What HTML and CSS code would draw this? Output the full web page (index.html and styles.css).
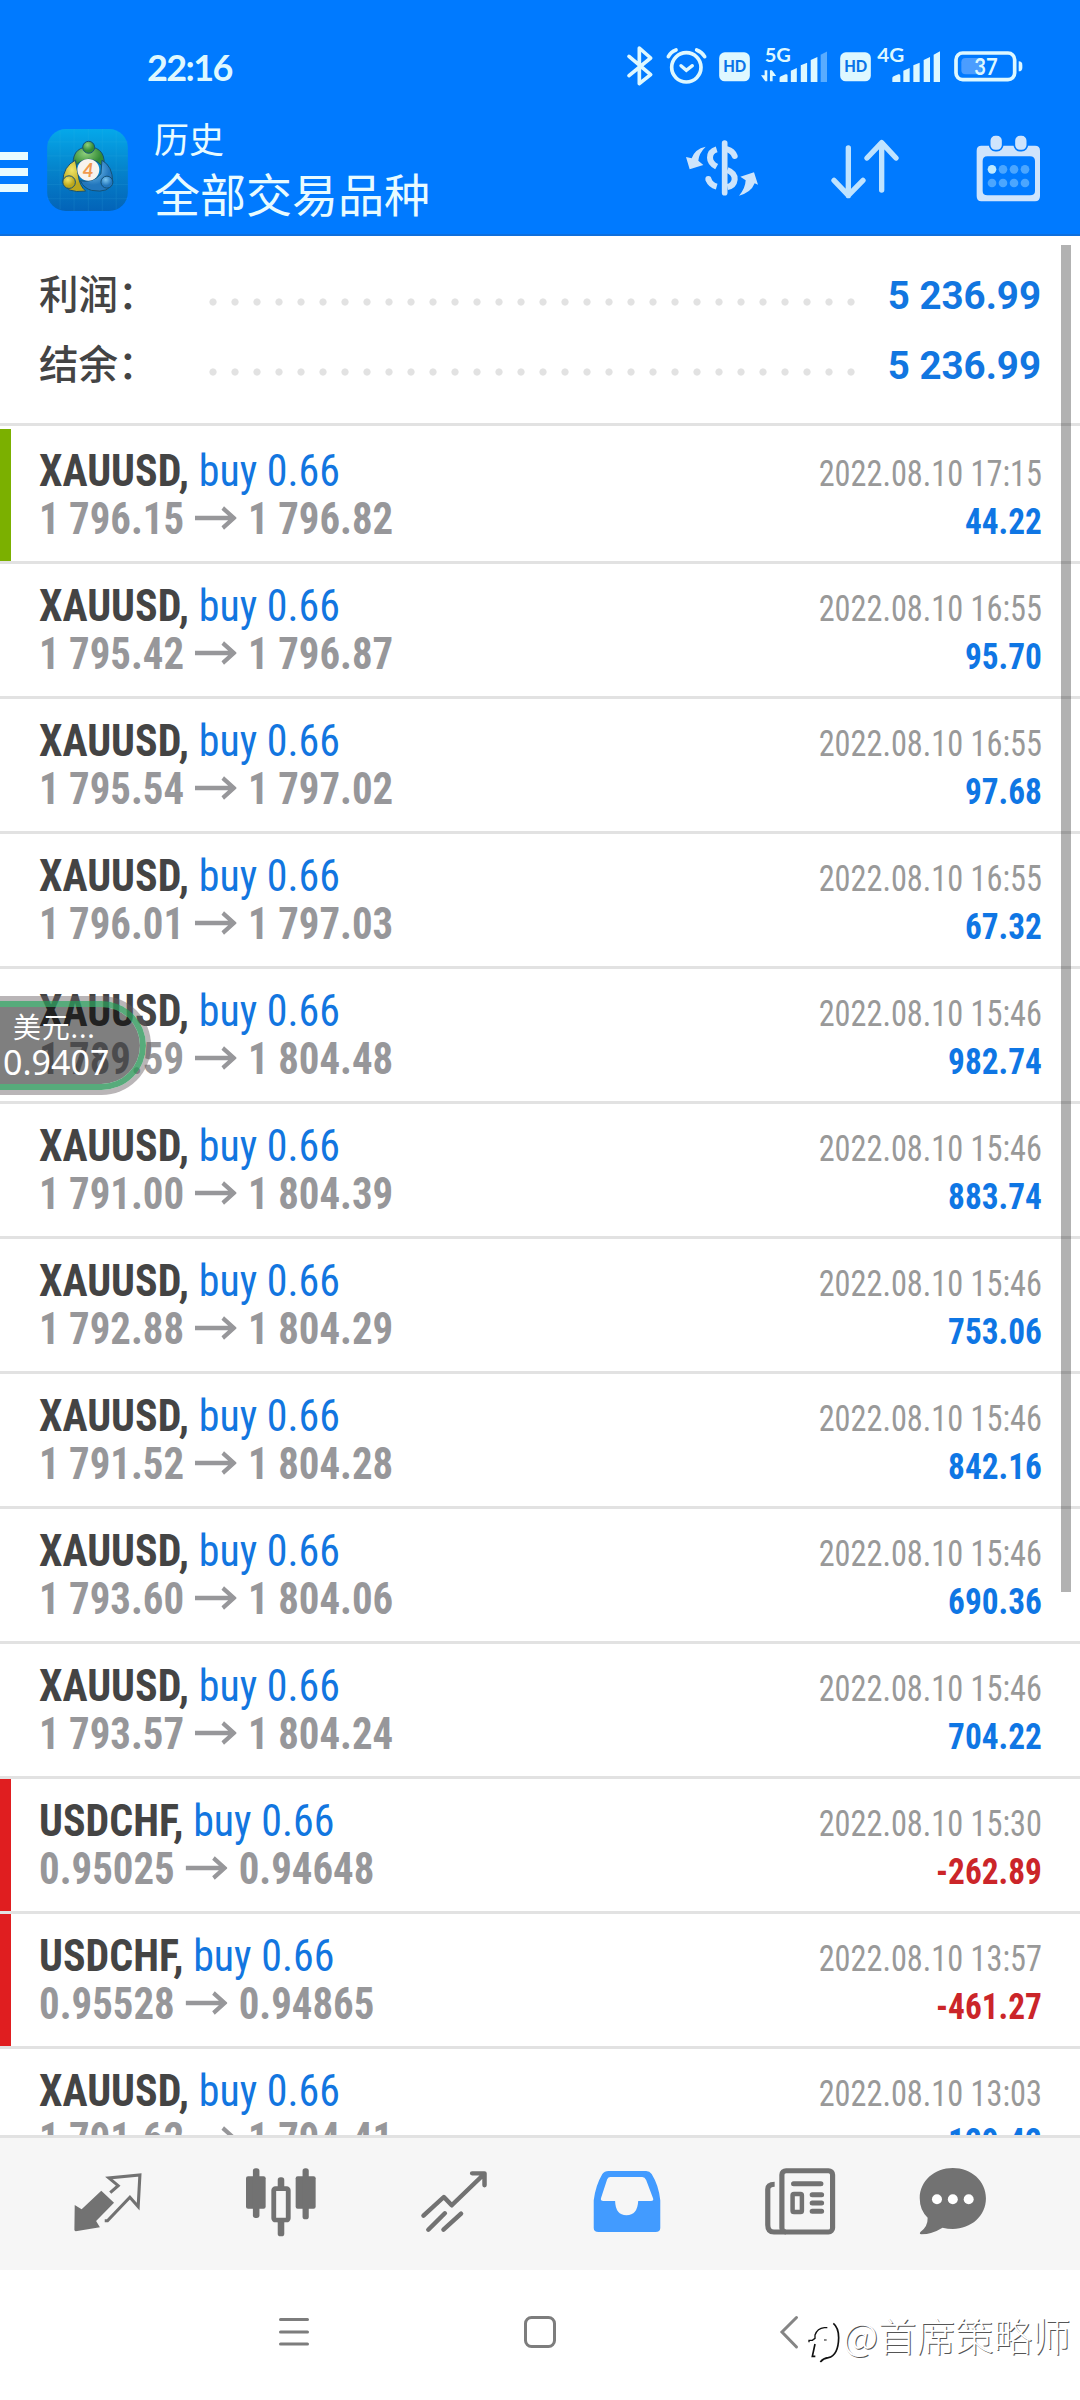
FILE: index.html
```html
<!DOCTYPE html>
<html lang="zh-CN">
<head>
<meta charset="utf-8">
<title>历史</title>
<link rel="stylesheet" href="styles.css">
</head>
<body>
<svg class="defs" width="0" height="0" aria-hidden="true">
  <symbol id="arrow" viewBox="0 0 45 24"><path d="M0 12H42M30 2l12 10-12 10" fill="none" stroke="currentColor" stroke-width="4.300"/></symbol>
  <symbol id="hd" viewBox="356 97 92 90"><rect x="356" y="98" width="92" height="87" rx="17" fill="#def8ff"/><text x="368" y="158" font-family="Lato, sans-serif" font-weight="900" font-size="48" fill="#0a74e8" textLength="69" lengthAdjust="spacingAndGlyphs">HD</text></symbol>
</svg>
<div class="screen">
  <header class="header">
    <div class="status">
      <span class="clock">22:16</span>
      <div class="status-icons">
        <svg class="bt" viewBox="81 80 78 120"><path d="M87 111L152 166 118 193V86L152 116 87 169" fill="none" stroke="#def8ff" stroke-width="11" stroke-linejoin="round" stroke-linecap="round"/></svg>
        <svg class="alarm" viewBox="198 80 123 120"><g fill="none" stroke="#def8ff" stroke-linecap="round"><circle cx="259" cy="144" r="44" stroke-width="11"/><path d="M243 139l16 14 18-14" stroke-width="10"/><path d="M205 112Q212 98 228 92M290 92Q306 98 314 112" stroke-width="11"/></g></svg>
        <svg class="hd"><use href="#hd"/></svg>
        <svg class="sig5" viewBox="484 80 202 120"><text x="495" y="128" font-family="Lato, sans-serif" font-weight="700" font-size="59" fill="#def8ff" textLength="79" lengthAdjust="spacingAndGlyphs">5G</text><g fill="#def8ff"><path d="M540 188v-12q0-3 4-5l14-6q6-2 6 4v19zM574 188v-34l18-8v42zM604 188v-50l19-8v58zM634 188v-66l20-9v75z"/><path d="M664 188v-82l19-10v92z" opacity=".4"/><path d="M495 153h8v33h-6l-13-18h11zM511 186v-33h6l13 17h-11v16z"/></g></svg>
        <svg class="hd"><use href="#hd"/></svg>
        <svg class="sig4" viewBox="830 80 192 120"><text x="831" y="128" font-family="Lato, sans-serif" font-weight="700" font-size="59" fill="#def8ff" textLength="81" lengthAdjust="spacingAndGlyphs">4G</text><path fill="#def8ff" d="M876 188v-12q0-3 4-5l14-6q6-2 6 4v19zM909 188v-34l19-8v42zM939 188v-50l19-8v58zM970 188v-66l19-9v75zM1000 188v-82l19-10v92z"/></svg>
        <svg class="battery" viewBox="1061 80 207 120"><rect x="1067" y="101" width="176" height="80" rx="20" fill="none" stroke="#def8ff" stroke-width="11"/><path d="M1096 116h48v49h-48q-13 0-13-13v-23q0-13 13-13z" fill="#4b9dff"/><path d="M1255 126q11 0 11 11v8q0 11-11 11z" fill="#def8ff"/><text x="1122" y="167" font-family="Lato, sans-serif" font-weight="700" font-size="68" fill="#def8ff" textLength="70" lengthAdjust="spacingAndGlyphs">37</text></svg>
      </div>
    </div>
    <div class="appbar">
      <span class="burger"><i></i><i></i><i></i></span>
      <svg class="logo" viewBox="21 27 243 247">
        <defs>
          <linearGradient id="bg" x1="0" y1="0" x2="0" y2="1"><stop offset="0" stop-color="#05a8ea"/><stop offset=".5" stop-color="#0583cb"/><stop offset="1" stop-color="#0363b8"/></linearGradient>
          <radialGradient id="gr" cx=".4" cy=".3"><stop offset="0" stop-color="#8fd07c"/><stop offset="1" stop-color="#348b37"/></radialGradient>
          <radialGradient id="ye" cx=".4" cy=".3"><stop offset="0" stop-color="#f2e466"/><stop offset="1" stop-color="#bba71d"/></radialGradient>
          <radialGradient id="bl" cx=".4" cy=".3"><stop offset="0" stop-color="#7cc6f0"/><stop offset="1" stop-color="#2377bd"/></radialGradient>
        </defs>
        <rect x="21" y="27" width="243" height="247" rx="56" fill="url(#bg)"/>
        <path d="M60 32v237M102 27v247M145 27v247M187 27v247M229 32v237M21 66h243M21 108h243M21 151h243M21 194h243M21 237h243" stroke="#45bde5" stroke-width="2" opacity=".2"/>
        <g stroke="#145176" stroke-width="3">
          <path d="M101 148Q90 84 146 80Q202 84 191 148Q180 122 146 118Q112 122 101 148Z" fill="url(#gr)"/>
          <path d="M106 121Q69 140 68 186Q76 222 137 214Q119 200 114 164Z" fill="url(#ye)"/>
          <path d="M186 121Q219 140 218 186Q210 222 155 212Q132 206 121 183Q160 190 183 162Z" fill="url(#bl)"/>
          <circle cx="146" cy="82" r="18" fill="url(#gr)"/><circle cx="87" cy="187" r="19" fill="url(#ye)"/><circle cx="201" cy="187" r="18" fill="url(#bl)"/>
        </g>
        <circle cx="145" cy="150" r="33" fill="#f7f3ee"/>
        <text x="144" y="171" text-anchor="middle" font-family="Lato, sans-serif" font-style="italic" font-weight="700" font-size="58" fill="#f09a4e">4</text>
      </svg>
      <div class="titles"><span class="title">历史</span><span class="subtitle">全部交易品种</span></div>
      <svg class="act dollar" viewBox="255 340 222 210" fill="none" stroke="#cde4fb" stroke-width="18">
        <path d="M374 370v149" stroke-width="17" stroke-linecap="round"/>
        <path d="M350 389Q330 395 330 414Q330 430 350 441"/><path d="M382 389Q398 393 404 409" stroke-linecap="round"/>
        <path d="M382 451Q405 460 404 479Q402 498 382 502"/><path d="M350 501Q332 496 325 479" /><circle cx="325" cy="478" r="9" fill="#cde4fb" stroke="none"/>
        <path d="M317 381Q284 388 275 416L258 412 269 449 310 436 295 423Q296 402 317 381ZM417 528Q453 519 464 491L474 495 462 458 421 471 437 482Q436 507 417 528Z" fill="#cde4fb" stroke="none"/>
      </svg>
      <svg class="act sort" viewBox="690 340 210 210" fill="none" stroke="#bfe3ff" stroke-width="16" stroke-linecap="round" stroke-linejoin="round"><path d="M745 385v143M702 482l43 45 44-45M845 511V369M801 415l44-46 43 46"/></svg>
      <svg class="act cal" viewBox="1125 340 201 210"><path fill-rule="evenodd" fill="#cfe4fc" d="M1144 378h161q15 0 15 15v136q0 16-15 16h-161q-14 0-14-16V393q0-15 14-15zM1162 410q-14 0-14 14v90q0 13 14 13h128q15 0 15-13v-90q0-14-15-14z"/><g fill="#cfe4fc" stroke="#007aff" stroke-width="5"><rect x="1169" y="346" width="39" height="47" rx="17"/><rect x="1243" y="346" width="39" height="47" rx="17"/></g><g fill="#4ba6ff"><circle cx="1176" cy="449" r="13" fill="#bfeaff"/><circle cx="1209" cy="449" r="13"/><circle cx="1242" cy="449" r="13"/><circle cx="1275" cy="449" r="13"/><circle cx="1176" cy="490" r="13"/><circle cx="1209" cy="490" r="13"/><circle cx="1242" cy="490" r="13"/><circle cx="1275" cy="490" r="13"/></g></svg>
    </div>
  </header>

  <main class="list">
    <section class="summary">
      <div class="sum"><span class="label">利润：</span><span class="dots"></span><b>5 236.99</b></div>
      <div class="sum"><span class="label">结余：</span><span class="dots"></span><b>5 236.99</b></div>
    </section>
    <article class="trade win"><div class="l"><p><b>XAUUSD,</b> <span>buy 0.66</span></p><p class="px">1 796.15<svg><use href="#arrow"/></svg>1 796.82</p></div><div class="r"><p>2022.08.10 17:15</p><p class="pl">44.22</p></div></article>
    <article class="trade"><div class="l"><p><b>XAUUSD,</b> <span>buy 0.66</span></p><p class="px">1 795.42<svg><use href="#arrow"/></svg>1 796.87</p></div><div class="r"><p>2022.08.10 16:55</p><p class="pl">95.70</p></div></article>
    <article class="trade"><div class="l"><p><b>XAUUSD,</b> <span>buy 0.66</span></p><p class="px">1 795.54<svg><use href="#arrow"/></svg>1 797.02</p></div><div class="r"><p>2022.08.10 16:55</p><p class="pl">97.68</p></div></article>
    <article class="trade"><div class="l"><p><b>XAUUSD,</b> <span>buy 0.66</span></p><p class="px">1 796.01<svg><use href="#arrow"/></svg>1 797.03</p></div><div class="r"><p>2022.08.10 16:55</p><p class="pl">67.32</p></div></article>
    <article class="trade"><div class="l"><p><b>XAUUSD,</b> <span>buy 0.66</span></p><p class="px">1 789.59<svg><use href="#arrow"/></svg>1 804.48</p></div><div class="r"><p>2022.08.10 15:46</p><p class="pl">982.74</p></div></article>
    <article class="trade"><div class="l"><p><b>XAUUSD,</b> <span>buy 0.66</span></p><p class="px">1 791.00<svg><use href="#arrow"/></svg>1 804.39</p></div><div class="r"><p>2022.08.10 15:46</p><p class="pl">883.74</p></div></article>
    <article class="trade"><div class="l"><p><b>XAUUSD,</b> <span>buy 0.66</span></p><p class="px">1 792.88<svg><use href="#arrow"/></svg>1 804.29</p></div><div class="r"><p>2022.08.10 15:46</p><p class="pl">753.06</p></div></article>
    <article class="trade"><div class="l"><p><b>XAUUSD,</b> <span>buy 0.66</span></p><p class="px">1 791.52<svg><use href="#arrow"/></svg>1 804.28</p></div><div class="r"><p>2022.08.10 15:46</p><p class="pl">842.16</p></div></article>
    <article class="trade"><div class="l"><p><b>XAUUSD,</b> <span>buy 0.66</span></p><p class="px">1 793.60<svg><use href="#arrow"/></svg>1 804.06</p></div><div class="r"><p>2022.08.10 15:46</p><p class="pl">690.36</p></div></article>
    <article class="trade"><div class="l"><p><b>XAUUSD,</b> <span>buy 0.66</span></p><p class="px">1 793.57<svg><use href="#arrow"/></svg>1 804.24</p></div><div class="r"><p>2022.08.10 15:46</p><p class="pl">704.22</p></div></article>
    <article class="trade loss"><div class="l"><p><b>USDCHF,</b> <span>buy 0.66</span></p><p class="px">0.95025<svg><use href="#arrow"/></svg>0.94648</p></div><div class="r"><p>2022.08.10 15:30</p><p class="pl">-262.89</p></div></article>
    <article class="trade loss"><div class="l"><p><b>USDCHF,</b> <span>buy 0.66</span></p><p class="px">0.95528<svg><use href="#arrow"/></svg>0.94865</p></div><div class="r"><p>2022.08.10 13:57</p><p class="pl">-461.27</p></div></article>
    <article class="trade"><div class="l"><p><b>XAUUSD,</b> <span>buy 0.66</span></p><p class="px">1 791.62<svg><use href="#arrow"/></svg>1 794.41</p></div><div class="r"><p>2022.08.10 13:03</p><p class="pl">129.42</p></div></article>
    <div class="scrollbar"></div>
    <div class="pill"><span class="pair">美元...</span><span class="rate">0.9407</span></div>
  </main>

  <nav class="tabs">
    <svg viewBox="214 140 203 210" preserveAspectRatio="none"><path d="M296 211L333 247 281 302 292 321 222 333Q218 332 218 328L219 254 239 267Z" fill="#727272"/><path d="M306 301h8L379 231 403 259 408 164 318 173 345 196 322 217" fill="none" stroke="#727272" stroke-width="9"/></svg>
    <svg viewBox="715 140 203 210" preserveAspectRatio="none" fill="#727272"><rect x="715" y="168" width="57" height="97" rx="6"/><rect x="735" y="144" width="19" height="149" rx="8"/><rect x="859" y="168" width="58" height="97" rx="6"/><rect x="879" y="144" width="18" height="153" rx="8"/><rect x="807" y="171" width="19" height="35" rx="8"/><rect x="807" y="298" width="19" height="50" rx="8"/><rect x="795.500" y="205" width="42" height="94" rx="5" fill="#f6f6f6" stroke="#727272" stroke-width="14"/></svg>
    <svg viewBox="1217 140 203 210" preserveAspectRatio="none" fill="none" stroke="#727272" stroke-width="13" stroke-linecap="round" stroke-linejoin="round"><path d="M1230 286L1289 230 1312 255 1406 161M1371 159H1407V195M1244 328L1292 279M1288 328L1339 280"/></svg>
    <svg viewBox="153 140 203 210" preserveAspectRatio="none"><path fill-rule="evenodd" fill="#429bff" d="M158 240Q163 196 183 161Q189 152 201 152H310Q320 152 326 161Q347 196 351 240V323Q351 335 337 335H172Q158 335 158 323ZM206 170Q200 170 197 177L179 234Q177 242 186 242H220Q221 284 253 285Q285 284 287 242H324Q333 242 330 234L310 179Q306 170 299 170Z"/></svg>
    <svg viewBox="656 140 203 210" preserveAspectRatio="none" fill="none" stroke="#727272" stroke-width="15"><path d="M717 335H682Q664 335 664 314V207Q664 192 684 192"/><rect x="705" y="151" width="147" height="184" rx="12"/><rect x="736" y="221" width="27" height="54" rx="4" stroke-width="13"/><path d="M739 190H818M793 223H820M793 248H820M793 273H820" stroke-linecap="round"/></svg>
    <svg viewBox="1098 140 203 210" preserveAspectRatio="none"><path d="M1199 143C1252 143 1295 181 1295 234C1295 287 1252 326 1199 326Q1184 326 1169 322Q1140 341 1107 342Q1101 341 1105 335Q1127 318 1126 292Q1103 270 1103 234C1103 181 1146 143 1199 143Z" fill="#727272"/><g fill="#fff"><ellipse cx="1153" cy="237" rx="14.500" ry="15"/><ellipse cx="1199" cy="237" rx="14.500" ry="15"/><ellipse cx="1245" cy="237" rx="14.500" ry="15"/></g></svg>
  </nav>
  <footer class="sysnav">
    <svg class="recent" viewBox="0 0 30 36"><path d="M1.500 5.500h27M1.500 18h27M1.500 30h27" stroke="#7d7d7d" stroke-width="3" stroke-linecap="round"/></svg>
    <svg class="home" viewBox="0 0 32 36"><rect x="1.500" y="3.500" width="29" height="29" rx="6" fill="none" stroke="#7d7d7d" stroke-width="3"/></svg>
    <svg class="back" viewBox="0 0 18 36"><path d="M16.500 3.500L2 18l14.500 15" fill="none" stroke="#858585" stroke-width="3" stroke-linecap="round"/></svg>
    <div class="mark"><svg viewBox="87 50 93 135" fill="none" stroke="#111"><path d="M87 126V120H97L105 114V104Q112 84 133 82H142" stroke-width="4"/><path d="M105 131L97 168H106" stroke-width="5"/><path d="M121 185Q130 174 145 172Q175 165 176 112Q176 82 160 69" stroke-width="5"/><path d="M132 119h8" stroke-width="3"/></svg><span>@首席策略师</span></div>
  </footer>
</div>
</body>
</html>
```
FILE: styles.css
```css
* { box-sizing: border-box; }
body { margin: 0; font-family: Roboto, "Noto Sans CJK SC", sans-serif; background: #fff; }
p { margin: 0; }
svg { display: block; flex: none; overflow: visible; }
.defs { position: absolute; }
.screen { width: 1080px; height: 2400px; display: flex; flex-direction: column; overflow: hidden; }

.header { height: 236px; flex: none; background: #007aff; border-bottom: 2px solid #0f6fdc; }
.status { height: 113px; display: flex; padding: 46px 0 0 147px; }
.clock { width: 480px; font: 700 36px/42px Lato, sans-serif; color: #def8ff; letter-spacing: -1.600px; }
.status-icons { display: flex; }
.status-icons svg { height: 40px; }
.bt { width: 26px; }
.alarm { width: 41px; margin-left: 13px; }
.status-icons .hd { width: 31px; height: 30px; margin: 6px 0 0 12px; }
.sig5 { width: 67px; margin-left: 11px; }
.sig4 { width: 64px; margin-left: 6px; }
.battery { width: 69px; margin-left: 13px; }

.appbar { display: flex; height: 120px; }
.burger { width: 28px; padding-top: 39px; display: flex; flex-direction: column; gap: 8px; }
.burger i { height: 8px; background: #e8fbff; }
.logo { width: 81px; height: 82px; margin: 16px 0 0 19px; }
.titles { width: 531px; margin-left: 26px; display: flex; flex-direction: column; color: #e8fbff; font-family: "Noto Sans CJK SC", sans-serif; }
.title { font-size: 35px; line-height: 49px; }
.subtitle { font-size: 46px; line-height: 60px; }
.act { height: 70px; margin-top: 20px; }
.dollar { width: 74px; }
.sort { width: 70px; margin-left: 71px; }
.cal { width: 67px; margin-left: 75px; }

.list { position: relative; flex: none; height: 1899px; overflow: hidden; }
.summary { height: 190px; padding-top: 24px; border-bottom: 3px solid #e2e2e2; margin-bottom: 3px; }
.sum { height: 70px; display: flex; align-items: center; padding: 0 39px; }
.label { width: 171px; margin-top: -6px; font: 500 39.500px/64px "Noto Sans CJK SC", sans-serif; color: #444; }
.dots { width: 660px; height: 8px; margin: 14px 0 0 -8px; background: radial-gradient(circle at 11px 4px, #e2e2e2 3.200px, transparent 4px) 0 0 / 22px 8px repeat-x; }
.sum b { margin-left: auto; font-size: 38.500px; font-weight: 700; color: #1276e0; }
.trade { height: 135px; border-bottom: 3px solid #e2e2e2; display: flex; justify-content: space-between; padding: 0 38px 0 39px; position: relative; font-family: "Roboto Condensed", Roboto, sans-serif; font-stretch: 75%; white-space: nowrap; }
.win::before, .loss::before { content: ""; position: absolute; left: 0; top: 0; width: 11px; height: 132px; background: #7bb000; }
.loss::before { background: #e01e20; }
.l { padding-top: 18px; font-size: 44px; line-height: 48px; }
.l p { transform: scaleX(.953); transform-origin: left; }
.l b { color: #444; }
.l span { color: #1276e0; }
.l .px { display: flex; align-items: center; font-weight: 700; color: #97979a; transform: scaleX(.928); }
.px svg { width: 45px; height: 24px; margin: 0 12px 3px; }
.r { padding-top: 21px; font-size: 36px; line-height: 48px; text-align: right; color: #999; }
.r p { transform: scaleX(.897); transform-origin: right; }
.r .pl { font-weight: 700; color: #0f76e4; transform: scaleX(.925); }
.loss .pl { color: #cb2529; }
.scrollbar { position: absolute; left: 1061px; top: 9px; width: 10px; height: 1347px; background: rgba(0, 0, 0, .3); }
.pill { position: absolute; left: -20px; top: 765px; width: 166px; height: 89px; padding: 0 0 0 18px; border: 6px solid rgba(45, 150, 90, .8); border-left: 0; border-radius: 0 45px 45px 0; background: rgba(0, 0, 0, .5); background-clip: padding-box; box-shadow: 0 0 0 5px rgba(100, 90, 95, .45); color: #fff; display: flex; flex-direction: column; }
.pair { padding-left: 15px; font: 28px/40px "Noto Sans", "Noto Sans CJK SC", sans-serif; letter-spacing: .8px; }
.rate { padding-left: 5px; margin-top: -4px; font: 34px/38px "Noto Sans", sans-serif; }

.tabs { height: 135px; flex: none; background: #f6f6f6; border-top: 3px solid #e2e2e2; display: flex; gap: 103px; padding: 29px 0 0 73px; }
.tabs svg { width: 70px; height: 70px; }
.tabs svg:last-child { margin-left: -20px; }
.sysnav { height: 130px; flex: none; display: flex; padding: 44px 0 0 279px; }
.sysnav > svg { height: 36px; }
.recent { width: 30px; }
.home { width: 32px; margin-left: 215px; }
.back { width: 18px; margin-left: 224px; }
.mark { display: flex; margin-left: 11px; height: 50px; }
.mark svg { width: 31px; height: 45px; margin-top: 3px; }
.mark span { margin-left: 3px; font: 300 38.500px/40px "Noto Sans CJK SC", sans-serif; color: #fff; text-shadow: 1px 1px 0 #555; white-space: nowrap; }
```
